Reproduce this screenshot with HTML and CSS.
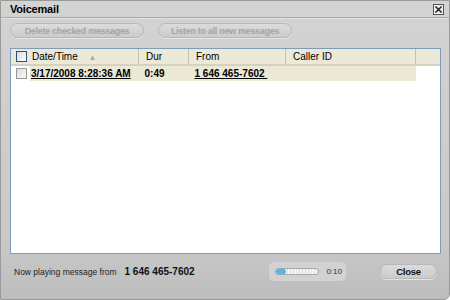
FILE: index.html
```html
<!DOCTYPE html>
<html>
<head>
<title>Voicemail</title>
<link rel="stylesheet" href="styles.css">
</head>
<body>

<div class="window">
  <div class="titlebar">
    <span class="title">Voicemail</span>
    <span class="close-x">
      <svg width="9" height="9" viewBox="0 0 9 9"><path d="M1.5 1.5 L7.5 7.5 M7.5 1.5 L1.5 7.5" stroke="#222" stroke-width="1.6"/></svg>
    </span>
  </div>

  <div class="toolbar">
    <button class="pill disabled">Delete checked messages</button>
    <button class="pill disabled">Listen to all new messages</button>
  </div>

  <div class="list">
    <table id="messages">
      <thead>
      <tr>
        <th class="col-check"><span class="box"></span></th>
        <th class="col-date">Date/Time <span class="sort">&#9650;</span></th>
        <th class="col-dur">Dur</th>
        <th class="col-from">From</th>
        <th class="col-caller">Caller ID</th>
        <th class="col-rest"></th>
      </tr>
      </thead>
      <tbody>
      <tr class="msg">
        <td class="col-check"><span class="box"></span></td>
        <td class="col-date"><a href="#">3/17/2008 8:28:36 AM</a></td>
        <td>0:49</td>
        <td><a href="#">1 646 465-7602&nbsp;</a></td>
        <td></td>
        <td class="col-rest"></td>
      </tr>
      </tbody>
    </table>
  </div>

  <div class="statusbar">
    <span class="now">Now playing message from</span>
    <span class="number">1 646 465-7602</span>
    <div class="player">
      <div class="track"><div class="fill" style="width: 22%"></div></div>
      <span class="time">0:10</span>
    </div>
    <button class="pill close-btn">Close</button>
  </div>
</div>

</body>
</html>
```

FILE: styles.css
```css
body {
  margin: 0;
  font-family: "Liberation Sans", Arial, sans-serif;
  font-size: 11px;
  background: #ffffff;
}

.window {
  width: 448px;
  height: 298px;
  border: 1px solid #9a9a9a;
  border-bottom-right-radius: 6px;
  background: linear-gradient(#d3d3d3, #c9c9c9 80%, #bdbdbd);
  display: flex;
  flex-direction: column;
  overflow: hidden;
  white-space: nowrap;
}

.titlebar {
  height: 16px;
  display: flex;
  align-items: center;
  justify-content: space-between;
  padding: 0 5px 0 9px;
  border-bottom: 1px solid #a9a9a9;
  box-shadow: 0 1px 0 #e2e2e2;
}

.title {
  font-weight: bold;
  color: #000;
  font-size: 11px;
  letter-spacing: -0.2px;
}

.close-x {
  width: 9px;
  height: 9px;
  border: 1px solid #555;
  background: #f0f0f0;
  display: flex;
}

.toolbar {
  display: flex;
  gap: 14px;
  padding: 5px 9px 0 9px;
  height: 16px;
}

.pill {
  font-family: inherit;
  font-size: 9px;
  font-weight: bold;
  letter-spacing: -0.3px;
  height: 15px;
  padding: 0;
  border: 1px solid #b9b9b9;
  border-radius: 8px;
  background: linear-gradient(#dcdcdc, #cbcbcb);
  box-shadow: 0 1px 0 #e4e4e4;
  color: #111;
  white-space: nowrap;
}

.pill.disabled {
  color: #a4a4a4;
  width: 134px;
}

.list {
  margin: 9px 8px 0 9px;
  height: 204px;
  background: #ffffff;
  border: 1px solid #7f9db9;
}

table {
  border-collapse: collapse;
  width: 100%;
  table-layout: fixed;
}

th {
  background: #ece9d8;
  font-weight: normal;
  text-align: left;
  height: 15px;
  padding: 0 0 0 7px;
  border-bottom: 2px solid #d6d2c2;
  color: #000;
  font-size: 10px;
}

th + th {
  border-left: 1px solid #c5c2b2;
}

th.col-date { border-left: none; }

td {
  height: 15px;
  padding: 0 0 0 6px;
  background: #ebe8d6;
  font-size: 10px;
  font-weight: bold;
  overflow: hidden;
}

td.col-check, td.col-rest {
  background: #ffffff;
}

th.col-check, td.col-check {
  width: 14px;
  padding: 0 0 0 5px;
}

th.col-date { width: 106px; padding-left: 2px; }
td.col-date { width: 107px; padding-left: 1px; }
.col-dur { width: 42px; }
.col-from { width: 89px; }
.col-caller { width: 122px; }

a {
  color: #000;
  text-decoration: underline;
}

.box {
  display: block;
  width: 9px;
  height: 9px;
  border: 1px solid #2a4f84;
  background: linear-gradient(135deg, #dcdcd6, #fbfbf9);
}

td .box {
  border-color: #9a9a9a;
}

.sort {
  color: #b0ad9f;
  font-size: 8px;
  margin-left: 8px;
}

.statusbar {
  display: flex;
  align-items: center;
  padding: 8px 12px 0 13px;
}

.now {
  font-size: 8.5px;
  color: #222;
}

.number {
  font-weight: bold;
  font-size: 10px;
  margin-left: 8px;
  color: #111;
}

.player {
  margin-left: auto;
  display: flex;
  align-items: center;
  gap: 7px;
  background: #d2d2d2;
  border-radius: 5px;
  padding: 5px 4px 5px 6px;
}

.track {
  width: 42px;
  height: 5px;
  border: 1px solid #a8a8a8;
  border-radius: 3px;
  background: repeating-linear-gradient(90deg, #f4f4f4 0 2px, #e0e0e0 2px 3px);
}

.fill {
  height: 100%;
  background: #56b6ea;
  border-radius: 3px;
}

.time {
  font-size: 8px;
  color: #333;
}

.close-btn {
  margin-left: 34px;
  width: 57px;
  font-size: 9.5px;
}
```
